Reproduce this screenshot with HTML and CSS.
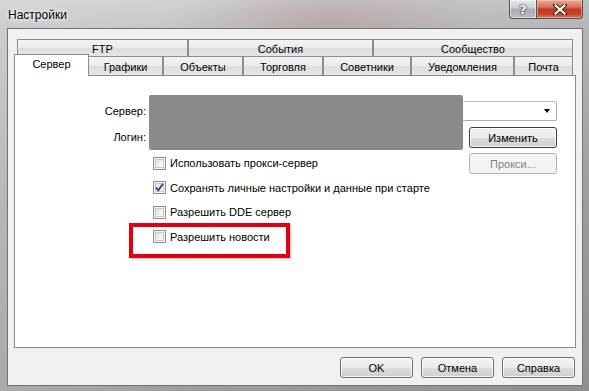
FILE: index.html
```html
<!DOCTYPE html>
<html lang="ru">
<head>
<meta charset="utf-8">
<title>Настройки</title>
<link rel="stylesheet" href="styles.css">
</head>
<body>
<div class="frame">
  <div class="titlebar">
    <span class="title">Настройки</span>
    <div class="caption-btns">
      <div class="cbtn help"><span class="help-glyph">?</span></div>
      <div class="cbtn close">
        <svg width="14" height="11" viewBox="0 0 14 11">
          <path d="M2 1 L12 10 M12 1 L2 10" stroke="#3a1a14" stroke-width="4" stroke-linecap="square" fill="none"/>
          <path d="M2.5 1.5 L11.5 9.5 M11.5 1.5 L2.5 9.5" stroke="#ffffff" stroke-width="2.2" stroke-linecap="square" fill="none"/>
        </svg>
      </div>
    </div>
  </div>
  <div class="client">
    <div class="tabs">
      <div class="tabrow row1">
        <div class="tab t-ftp">FTP</div>
        <div class="tab t-events">События</div>
        <div class="tab t-community">Сообщество</div>
      </div>
      <div class="tabrow row2">
        <div class="tab selected">Сервер</div>
        <div class="tab t-charts">Графики</div>
        <div class="tab t-objects">Объекты</div>
        <div class="tab t-trade">Торговля</div>
        <div class="tab t-experts">Советники</div>
        <div class="tab t-notify">Уведомления</div>
        <div class="tab t-mail">Почта</div>
      </div>
      <div class="panel">
        <div class="form">
          <div class="label">Сервер:</div>
          <div class="combo"><span class="arrow"></span></div>
          <div class="label">Логин:</div>
          <div class="field"></div>
          <div class="btn default">Изменить</div>
          <div class="checks">
            <div class="check"><span class="box"></span><span>Использовать прокси-сервер</span></div>
            <div class="check"><span class="box checked"><svg width="11" height="11" viewBox="0 0 11 11"><path d="M2 5.5 L4.3 8.3 L9 1.8" stroke="#2e3f8c" stroke-width="1.8" fill="none"/></svg></span><span>Сохранять личные настройки и данные при старте</span></div>
            <div class="check"><span class="box"></span><span>Разрешить DDE сервер</span></div>
            <div class="check"><span class="box"></span><span>Разрешить новости</span></div>
          </div>
          <div class="btn disabled proxy">Прокси...</div>
        </div>
        <div class="redact"></div>
        <div class="highlight"></div>
      </div>
    </div>
    <div class="buttons">
      <div class="btn dlg">OK</div>
      <div class="btn dlg">Отмена</div>
      <div class="btn dlg">Справка</div>
    </div>
  </div>
</div>
</body>
</html>
```

FILE: styles.css
```css
* { box-sizing: border-box; }
html, body { margin: 0; padding: 0; }
body {
  width: 589px;
  height: 391px;
  overflow: hidden;
  font-family: "Liberation Sans", Arial, sans-serif;
  font-size: 11px;
  color: #000;
}
.frame {
  width: 589px;
  height: 391px;
  padding: 0 6px 5px 7px;
  display: flex;
  flex-direction: column;
  background:
    radial-gradient(ellipse 160px 40px at 330px 20px, rgba(170,120,120,0.35), rgba(170,120,120,0) 100%),
    linear-gradient(90deg, rgba(255,255,255,0.15), rgba(0,0,0,0) 40%, rgba(0,0,0,0.08) 100%),
    linear-gradient(180deg, #cfd0d1 0px, #c3c4c5 28px, #a9aaac 200px, #9a9b9e 391px);
}
.titlebar {
  height: 28px;
  display: flex;
  justify-content: space-between;
  align-items: flex-start;
  flex: none;
}
.title {
  font-size: 12px;
  padding: 8px 0 0 1px;
  color: #000;
  text-shadow: 0 0 6px #fff, 0 0 3px #fff;
}
.caption-btns {
  display: flex;
  height: 19px;
}
.cbtn {
  height: 19px;
  display: flex;
  align-items: center;
  justify-content: center;
  border: 1px solid #4e5257;
  border-top: none;
}
.help {
  width: 27px;
  border-right: none;
  border-bottom-left-radius: 4px;
  background: linear-gradient(180deg, #e6e8ea 0%, #cbcfd3 45%, #a8adb3 50%, #b8bcc1 100%);
  box-shadow: inset 0 0 0 1px rgba(255,255,255,0.5);
}
.help-glyph {
  font-family: "DejaVu Sans", sans-serif;
  font-weight: bold;
  font-size: 13px;
  color: #fff;
  text-shadow: 0 0 1px #333, 0 0 1px #333, 0 0 2px #333;
  line-height: 1;
}
.close {
  width: 47px;
  border-bottom-right-radius: 4px;
  background: linear-gradient(180deg, #e8a898 0%, #d7705e 40%, #c1381f 52%, #c8442a 80%, #de7d62 100%);
  box-shadow: inset 0 0 0 1px rgba(255,220,210,0.45);
}
.client {
  width: 576px;
  height: 358px;
  border: 1px solid #6f7277;
  background: #f0f0f0;
  padding: 10px 7px 7px 6px;
  display: flex;
  flex-direction: column;
}
.tabs {
  width: 562px;
  display: flex;
  flex-direction: column;
}
.tabrow {
  display: flex;
  margin: 0 3px;
}
.tab {
  border: 1px solid #898c95;
  border-bottom: none;
  background: linear-gradient(180deg, #f3f3f3 0%, #ebebeb 50%, #dedede 51%, #e6e6e6 100%);
  display: flex;
  align-items: center;
  justify-content: center;
  white-space: nowrap;
}
.row1 .tab { height: 17px; padding-top: 1px; }
.row2 .tab { height: 19px; padding-top: 1px; }
.t-ftp { width: 171px; }
.t-events { width: 185px; }
.t-community { width: 200px; }
.t-charts { width: 75px; }
.t-objects { width: 80px; }
.t-trade { width: 80px; }
.t-experts { width: 88px; }
.t-notify { width: 103px; }
.t-mail { width: 59px; }
.row2 .tab.selected {
  width: 75px;
  height: 22px;
  margin: -2px -1px -1px -3px;
  background: #fff;
  position: relative;
  z-index: 2;
  padding-top: 0;
  padding-bottom: 3px;
}
.panel {
  height: 273px;
  border: 1px solid #898c95;
  background: #fff;
  position: relative;
  z-index: 1;
}
.form {
  display: grid;
  grid-template-columns: 134px 320px 88px;
  grid-template-rows: 20px 20px auto;
  row-gap: 6px;
  padding-top: 25px;
}
.label {
  text-align: right;
  padding-right: 3px;
  align-self: center;
}
.combo {
  grid-column: 2 / 4;
  border: 1px solid #abadb3;
  border-top-color: #bfc1c6;
  border-radius: 2px;
  background: #fff;
  display: flex;
  justify-content: flex-end;
  align-items: center;
  padding-right: 6px;
}
.arrow {
  width: 0;
  height: 0;
  border-left: 3.5px solid transparent;
  border-right: 3.5px solid transparent;
  border-top: 4px solid #000;
}
.field {
  width: 313px;
  border: 1px solid #abadb3;
  background: #fff;
}
.btn {
  height: 21px;
  border: 1px solid #707070;
  border-radius: 3px;
  background: linear-gradient(180deg, #f2f2f2 0%, #ebebeb 50%, #dddddd 51%, #cfcfcf 100%);
  box-shadow: inset 0 0 0 1px rgba(255,255,255,0.75);
  display: flex;
  align-items: center;
  justify-content: center;
  white-space: nowrap;
}
.btn.default {
  border-color: #3c3c3c;
  height: 21px;
}
.btn.disabled {
  border-color: #adb2b5;
  background: #f4f4f4;
  box-shadow: none;
  color: #838383;
}
.proxy {
  grid-column: 3;
  grid-row: 3;
  align-self: start;
}
.checks {
  grid-column: 2;
  grid-row: 3;
  display: flex;
  flex-direction: column;
  gap: 4.5px;
  padding-left: 4px;
}
.check {
  height: 20px;
  display: flex;
  align-items: center;
  gap: 4px;
}
.box {
  width: 13px;
  height: 13px;
  border: 1px solid #8e8f8f;
  background: linear-gradient(135deg, #dcdcdc 0%, #f4f4f4 60%, #ffffff 100%);
  box-shadow: inset 0 0 0 1px #f4f4f4, inset 0 0 0 2px #c9c9c9;
  display: flex;
  align-items: center;
  justify-content: center;
  flex: none;
}
.redact {
  position: absolute;
  left: 134px;
  top: 19px;
  width: 314px;
  height: 55px;
  background: #8a8a8a;
  border-radius: 2px;
}
.highlight {
  position: absolute;
  left: 114px;
  top: 147px;
  width: 161px;
  height: 35px;
  border: 4px solid #e3000e;
  box-shadow: 1px 1px 2px rgba(0,0,0,0.25);
}
.buttons {
  display: flex;
  justify-content: flex-end;
  gap: 8px;
  margin-top: 9px;
}
.btn.dlg {
  width: 73px;
}
```
